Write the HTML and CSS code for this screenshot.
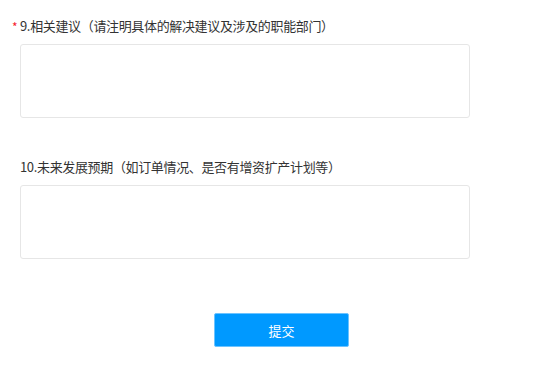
FILE: index.html
```html
<!DOCTYPE html>
<html lang="zh-CN">
<head>
<meta charset="utf-8">
<title>表单</title>
<link rel="stylesheet" href="styles.css">
</head>
<body>
<form class="form">
  <div class="field">
    <div class="label"><span class="req">*</span>9.相关建议（请注明具体的解决建议及涉及的职能部门）</div>
    <textarea class="area"></textarea>
  </div>
  <div class="field second">
    <div class="label">10.未来发展预期（如订单情况、是否有增资扩产计划等）</div>
    <textarea class="area"></textarea>
  </div>
  <div class="actions">
    <button type="button" class="submit">提交</button>
  </div>
</form>
</body>
</html>
```

FILE: styles.css
```css
html, body {
  margin: 0;
  padding: 0;
  background: #ffffff;
}
body {
  font-family: "Microsoft YaHei", "Noto Sans CJK SC", "Liberation Sans", sans-serif;
  color: #333333;
}
.form {
  padding: 17px 0 0 20px;
  width: 450px;
  display: flex;
  flex-direction: column;
}
.field {
  display: flex;
  flex-direction: column;
}
.second {
  margin-top: 40px;
}
.label {
  position: relative;
  font-size: 13px;
  line-height: 18px;
  height: 18px;
  color: #333333;
  letter-spacing: -0.35px;
}
.req {
  position: absolute;
  left: -8px;
  top: 1px;
  color: #f5222d;
  font-size: 12px;
}
.area {
  margin-top: 9px;
  box-sizing: border-box;
  width: 450px;
  height: 74px;
  border: 1px solid #e6e6e6;
  border-radius: 3px;
  resize: none;
  outline: none;
  padding: 6px;
  font-family: inherit;
}
.actions {
  display: flex;
  justify-content: flex-start;
  padding-left: 194px;
  margin-top: 54px;
}
.submit {
  width: 135px;
  height: 34px;
  border: 1px solid #6cc3ff;
  border-radius: 2px;
  background: #0099ff;
  color: #ffffff;
  font-size: 13px;
  font-family: inherit;
  padding: 0;
}
```
